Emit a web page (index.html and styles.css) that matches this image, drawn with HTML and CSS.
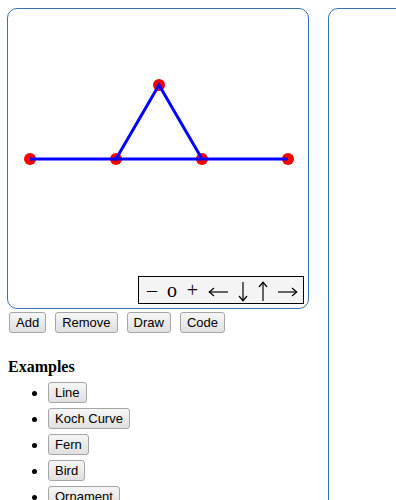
FILE: index.html
```html
<!DOCTYPE html>
<html>
<head>
<meta charset="utf-8">
<link rel="stylesheet" href="styles.css">
</head>
<body>
<div class="layout">
  <div class="left">
    <div class="panel">
      <svg class="canvas" width="300" height="299" viewBox="0 0 300 299">
        <g fill="#ff0000">
          <circle cx="22" cy="150" r="6"/>
          <circle cx="108" cy="150" r="6"/>
          <circle cx="151" cy="76" r="6"/>
          <circle cx="194" cy="150" r="6"/>
          <circle cx="280" cy="150" r="6"/>
        </g>
        <g stroke="#0000ff" stroke-width="3" fill="none">
          <polyline points="22,150 108,150 151,76 194,150 280,150"/>
          <line x1="108" y1="150" x2="194" y2="150"/>
        </g>
      </svg>
      <div class="toolbar">
        <span class="tool narrow">–</span>
        <span class="tool narrow">o</span>
        <span class="tool plus">+</span>
        <span class="tool wide" title="left">
          <svg width="20" height="23" viewBox="0 0 20 23"><g stroke="#000" stroke-width="1.2" fill="none"><line x1="1" y1="13" x2="20" y2="13"/><polyline points="6,9 1.3,13 6,17"/></g></svg>
        </span>
        <span class="tool narrow" title="down">
          <svg width="10" height="23" viewBox="0 0 10 23"><g stroke="#000" stroke-width="1.2" fill="none"><line x1="5" y1="3" x2="5" y2="22"/><polyline points="1,17 5,21.7 9,17"/></g></svg>
        </span>
        <span class="tool narrow" title="up">
          <svg width="10" height="23" viewBox="0 0 10 23"><g stroke="#000" stroke-width="1.2" fill="none"><line x1="5" y1="3.3" x2="5" y2="22"/><polyline points="1,8 5,3.3 9,8"/></g></svg>
        </span>
        <span class="tool wide" title="right">
          <svg width="20" height="23" viewBox="0 0 20 23"><g stroke="#000" stroke-width="1.2" fill="none"><line x1="0" y1="13" x2="19" y2="13"/><polyline points="14,9 18.7,13 14,17"/></g></svg>
        </span>
      </div>
    </div>
    <div class="actions">
      <button class="btn">Add</button>
      <button class="btn">Remove</button>
      <button class="btn">Draw</button>
      <button class="btn">Code</button>
    </div>
    <h3 class="heading">Examples</h3>
    <ul class="examples">
      <li><button class="btn">Line</button></li>
      <li><button class="btn">Koch Curve</button></li>
      <li><button class="btn">Fern</button></li>
      <li><button class="btn">Bird</button></li>
      <li><button class="btn">Ornament</button></li>
    </ul>
  </div>
  <div class="panel code-panel"></div>
</div>
</body>
</html>
```

FILE: styles.css
```css
html {
  overflow: hidden;
  background: #fff;
}
body {
  margin: 8px 0 0 7px;
  font-family: "Liberation Serif", "Times New Roman", serif;
  font-size: 16px;
  color: #000;
}
.layout {
  display: flex;
  align-items: flex-start;
  gap: 19px;
}
.left {
  width: 302px;
  flex: none;
}
.panel {
  position: relative;
  width: 300px;
  height: 299px;
  border: 1px solid #3870aa;
  border-radius: 10px;
}
.canvas {
  display: block;
}
.toolbar {
  position: absolute;
  right: 4px;
  bottom: 4px;
  display: flex;
  gap: 10px;
  height: 26px;
  align-items: center;
  padding: 0 5px 0 8px;
  border: 1px solid #000;
  background: #f4f4f4;
  font-family: "Liberation Serif", "Times New Roman", serif;
  font-size: 20px;
  line-height: 23px;
}
.tool {
  display: flex;
  justify-content: center;
  height: 23px;
  align-items: center;
}
.tool svg {
  display: block;
  flex: none;
}
.narrow {
  width: 10px;
}
.plus {
  width: 11px;
}
.wide {
  width: 20px;
}
.actions {
  display: flex;
  gap: 9px;
  margin: 3px 0 0 2px;
}
.btn {
  font-family: "Liberation Sans", Arial, sans-serif;
  font-size: 13px;
  line-height: 15px;
  height: 21px;
  padding: 2px 6px;
  margin: 0;
  color: #000;
  border: 1px solid #a6a6a6;
  border-radius: 3px;
  background: linear-gradient(#f6f6f6, #e0e0e0);
}
.heading {
  margin: 25px 0 0 1px;
  font-size: 16px;
  line-height: 18px;
  font-weight: bold;
}
.examples {
  margin: 6px 0 0 0;
  padding-left: 41px;
}
.examples li {
  line-height: 21px;
  margin-bottom: 5px;
}
.examples .btn {
  vertical-align: top;
}
.code-panel {
  flex: none;
  width: 300px;
  height: 700px;
}
```
